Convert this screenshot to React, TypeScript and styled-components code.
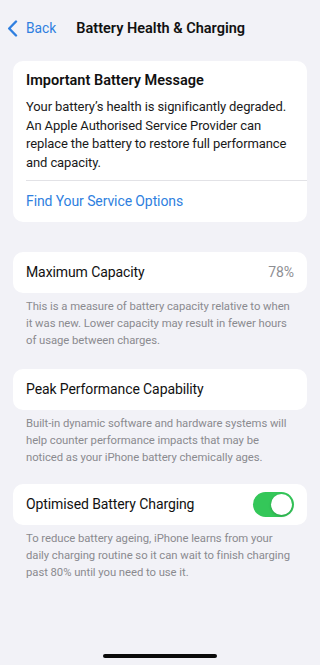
import React, { useState } from 'react';
import styled, { createGlobalStyle } from 'styled-components';

const GlobalStyle = createGlobalStyle`
  html, body {
    margin: 0;
    padding: 0;
    background: #f2f2f7;
  }
  body {
    font-family: Roboto, "Noto Sans", "Liberation Sans", sans-serif;
    -webkit-font-smoothing: antialiased;
  }
`;

const Screen = styled.div`
  position: relative;
  width: 320px;
  height: 665px;
  overflow: hidden;
  background: #f2f2f7;
`;

const NavBar = styled.div`
  height: 56px;
  display: flex;
  align-items: center;
  padding: 0 0 0 7px;
`;

const BackButton = styled.button`
  display: flex;
  align-items: center;
  gap: 8px;
  background: none;
  border: none;
  padding: 0;
  color: #2f7fe0;
  font-family: inherit;
  font-size: 13.8px;
  cursor: pointer;
`;

const NavTitle = styled.div`
  margin-left: 20px;
  font-size: 14.5px;
  font-weight: 600;
  color: #111;
`;

const Content = styled.div`
  padding: 5px 13px 0;
`;

const Card = styled.div`
  background: #fff;
  border-radius: 10px;
  overflow: hidden;
`;

const MessageBody = styled.div`
  padding: 10px 13px 7px;
`;

const MessageTitle = styled.div`
  font-size: 14.5px;
  line-height: 20px;
  font-weight: 600;
  color: #111;
`;

const MessageText = styled.p`
  margin: 7px 0 0;
  font-size: 13px;
  line-height: 18.7px;
  color: #1a1a1a;
  letter-spacing: -0.1px;
`;

const Divider = styled.div`
  height: 1px;
  background: #e2e2e6;
  margin-left: 13px;
`;

const LinkRow = styled.div`
  height: 41px;
  display: flex;
  align-items: center;
  padding: 0 13px;
  color: #2f7fe0;
  font-size: 14px;
  letter-spacing: -0.1px;
`;

const Section = styled.div<{ $gap: number }>`
  margin-top: ${(p) => p.$gap}px;
`;

const Row = styled.div`
  height: 41px;
  display: flex;
  align-items: center;
  justify-content: space-between;
  padding: 0 13px;
  font-size: 14px;
  color: #111;
  letter-spacing: -0.1px;
`;

const RowValue = styled.span`
  color: #8e8e93;
`;

const Footnote = styled.p`
  margin: 5px 0 0;
  padding: 0 13px;
  font-size: 11.3px;
  line-height: 17.3px;
  color: #8a8a8f;
  letter-spacing: -0.05px;
`;

const Toggle = styled.button<{ $on: boolean }>`
  position: relative;
  width: 41px;
  height: 25px;
  border-radius: 13px;
  border: none;
  padding: 0;
  background: ${(p) => (p.$on ? '#34c759' : '#e5e5ea')};
  cursor: pointer;
`;

const Knob = styled.span<{ $on: boolean }>`
  position: absolute;
  top: 2px;
  left: ${(p) => (p.$on ? '18px' : '2px')};
  width: 21px;
  height: 21px;
  border-radius: 50%;
  background: #fff;
  box-shadow: 0 1px 3px rgba(0, 0, 0, 0.2);
`;

const HomeIndicator = styled.div`
  position: absolute;
  left: 103px;
  bottom: 7px;
  width: 114px;
  height: 4px;
  border-radius: 3px;
  background: #0a0a0a;
`;

const Chevron = () => (
  <svg width="11" height="17" viewBox="0 0 11 17">
    <path d="M9 1.5 L2.2 8.5 L9 15.5" fill="none" stroke="#2f7fe0" strokeWidth="2.4" strokeLinecap="round" strokeLinejoin="round" />
  </svg>
);

export default function App() {
  const [optimised, setOptimised] = useState(true);

  return (
    <Screen>
      <GlobalStyle />
      <NavBar>
        <BackButton>
          <Chevron />
          Back
        </BackButton>
        <NavTitle>Battery Health &amp; Charging</NavTitle>
      </NavBar>
      <Content>
        <Card>
          <MessageBody>
            <MessageTitle>Important Battery Message</MessageTitle>
            <MessageText>
              Your battery’s health is significantly degraded. An Apple Authorised Service Provider can replace the
              battery to restore full performance and capacity.
            </MessageText>
          </MessageBody>
          <Divider />
          <LinkRow>Find Your Service Options</LinkRow>
        </Card>

        <Section $gap={30}>
          <Card>
            <Row>
              Maximum Capacity
              <RowValue>78%</RowValue>
            </Row>
          </Card>
          <Footnote>
            This is a measure of battery capacity relative to when it was new. Lower capacity may result in fewer hours
            of usage between charges.
          </Footnote>
        </Section>

        <Section $gap={19}>
          <Card>
            <Row>Peak Performance Capability</Row>
          </Card>
          <Footnote>
            Built-in dynamic software and hardware systems will help counter performance impacts that may be noticed as
            your iPhone battery chemically ages.
          </Footnote>
        </Section>

        <Section $gap={17}>
          <Card>
            <Row>
              Optimised Battery Charging
              <Toggle $on={optimised} onClick={() => setOptimised(!optimised)}>
                <Knob $on={optimised} />
              </Toggle>
            </Row>
          </Card>
          <Footnote>
            To reduce battery ageing, iPhone learns from your daily charging routine so it can wait to finish charging
            past 80% until you need to use it.
          </Footnote>
        </Section>
      </Content>
      <HomeIndicator />
    </Screen>
  );
}
